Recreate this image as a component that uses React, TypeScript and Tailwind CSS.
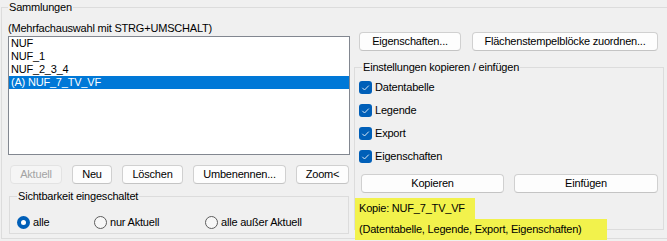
import React from "react";

const Btn = ({ w, children, disabled }: { w: string; children: React.ReactNode; disabled?: boolean }) => (
  <div
    className={
      "h-[19px] flex items-center justify-center rounded-[4px] border leading-[13px] " +
      w +
      (disabled
        ? " bg-[#f5f5f5] border-[#e3e3e3] text-[#a3a3a3]"
        : " bg-[#fdfdfd] border-[#d0d0d0] border-b-[#c4c4c4] text-black")
    }
  >
    {children}
  </div>
);

const Check = ({ label }: { label: string }) => (
  <div className="flex items-center h-[13px] ml-[4px]">
    <div className="w-[13px] h-[13px] rounded-[3px] bg-[#005fb8] flex items-center justify-center">
      <svg width="13" height="13" viewBox="0 0 13 13">
        <path d="M3.3 6.8 L5.5 9 L9.8 4.6" fill="none" stroke="#dbe8f5" strokeWidth="1" />
      </svg>
    </div>
    <span className="ml-[3px] leading-[13px]">{label}</span>
  </div>
);

const Radio = ({ label, checked, w }: { label: string; checked?: boolean; w: string }) => (
  <div className={"flex items-center h-[14px] " + w}>
    {checked ? (
      <div className="w-[13px] h-[13px] rounded-full bg-[#005fb8] flex items-center justify-center">
        <div className="w-[5px] h-[5px] rounded-full bg-white" />
      </div>
    ) : (
      <div className="w-[13px] h-[13px] rounded-full border border-[#5d5d5d] bg-[#f7f7f7]" />
    )}
    <span className="ml-[3px] leading-[13px]">{label}</span>
  </div>
);

export default function App() {
  return (
    <div className="w-[667px] h-[241px] overflow-hidden bg-[#f0f0f0] text-black text-[11px] tracking-[-0.2px] font-['Liberation_Sans',Arial,sans-serif]">
      <fieldset className="m-0 ml-[1px] p-0 min-w-0 w-[720px] h-[239px] border border-[#dcdcdc]">
        <legend className="ml-[6px] px-[1px] leading-[15px]">Sammlungen</legend>
        <div className="flex">
          {/* left column */}
          <div className="ml-[6px] w-[342px] flex flex-col">
            <div className="mt-[7px] leading-[13px]">(Mehrfachauswahl mit STRG+UMSCHALT)</div>
            <div className="mt-[1px] h-[119px] border border-[#828790] bg-white flex flex-col">
              <div className="h-[13px] leading-[13px] pl-[2px]">NUF</div>
              <div className="h-[13px] leading-[13px] pl-[2px]">NUF_1</div>
              <div className="h-[13px] leading-[13px] pl-[2px]">NUF_2_3_4</div>
              <div className="h-[13px] leading-[13px] pl-[2px] bg-[#0078d7] text-white">(A) NUF_7_TV_VF</div>
            </div>
            <div className="mt-[10px] ml-[2px] flex gap-[10px]">
              <Btn w="w-[52px]" disabled>Aktuell</Btn>
              <Btn w="w-[40px]">Neu</Btn>
              <Btn w="w-[61px]">Löschen</Btn>
              <Btn w="w-[93px]">Umbenennen...</Btn>
              <Btn w="w-[53px]">Zoom&lt;</Btn>
            </div>
            <fieldset className="m-0 mt-[5px] ml-[1px] p-0 min-w-0 w-[340px] h-[45px] border border-[#dcdcdc]">
              <legend className="ml-[7px] px-[1px] leading-[15px]">Sichtbarkeit eingeschaltet</legend>
              <div className="mt-[11px] pl-[7px] flex">
                <Radio w="w-[77px]" label="alle" checked />
                <Radio w="w-[111px]" label="nur Aktuell" />
                <Radio w="w-[120px]" label="alle außer Aktuell" />
              </div>
            </fieldset>
          </div>
          {/* right column */}
          <div className="ml-[4px] w-[310px] flex flex-col">
            <div className="mt-[17px] ml-[5px] flex gap-[11px]">
              <Btn w="w-[102px]">Eigenschaften...</Btn>
              <Btn w="w-[186px]">Flächenstempelblöcke zuordnen...</Btn>
            </div>
            <fieldset className="m-0 mt-[9px] p-0 min-w-0 w-[310px] h-[170px] border border-[#dcdcdc]">
              <legend className="ml-[7px] px-[1px] leading-[15px]">Einstellungen kopieren / einfügen</legend>
              <div className="mt-[6px] flex flex-col gap-[10px]">
                <Check label="Datentabelle" />
                <Check label="Legende" />
                <Check label="Export" />
                <Check label="Eigenschaften" />
              </div>
              <div className="mt-[11px] ml-[6px] flex gap-[10px]">
                <Btn w="w-[143px]">Kopieren</Btn>
                <Btn w="w-[144px]">Einfügen</Btn>
              </div>
              <div className="mt-[5px] w-[120px] h-[21px] leading-[21px] pl-[4px] bg-[#f2f24c]">Kopie: NUF_7_TV_VF</div>
              <div className="w-[252px] h-[21px] leading-[21px] pl-[4px] bg-[#f2f24c]">(Datentabelle, Legende, Export, Eigenschaften)</div>
            </fieldset>
          </div>
        </div>
      </fieldset>
    </div>
  );
}
